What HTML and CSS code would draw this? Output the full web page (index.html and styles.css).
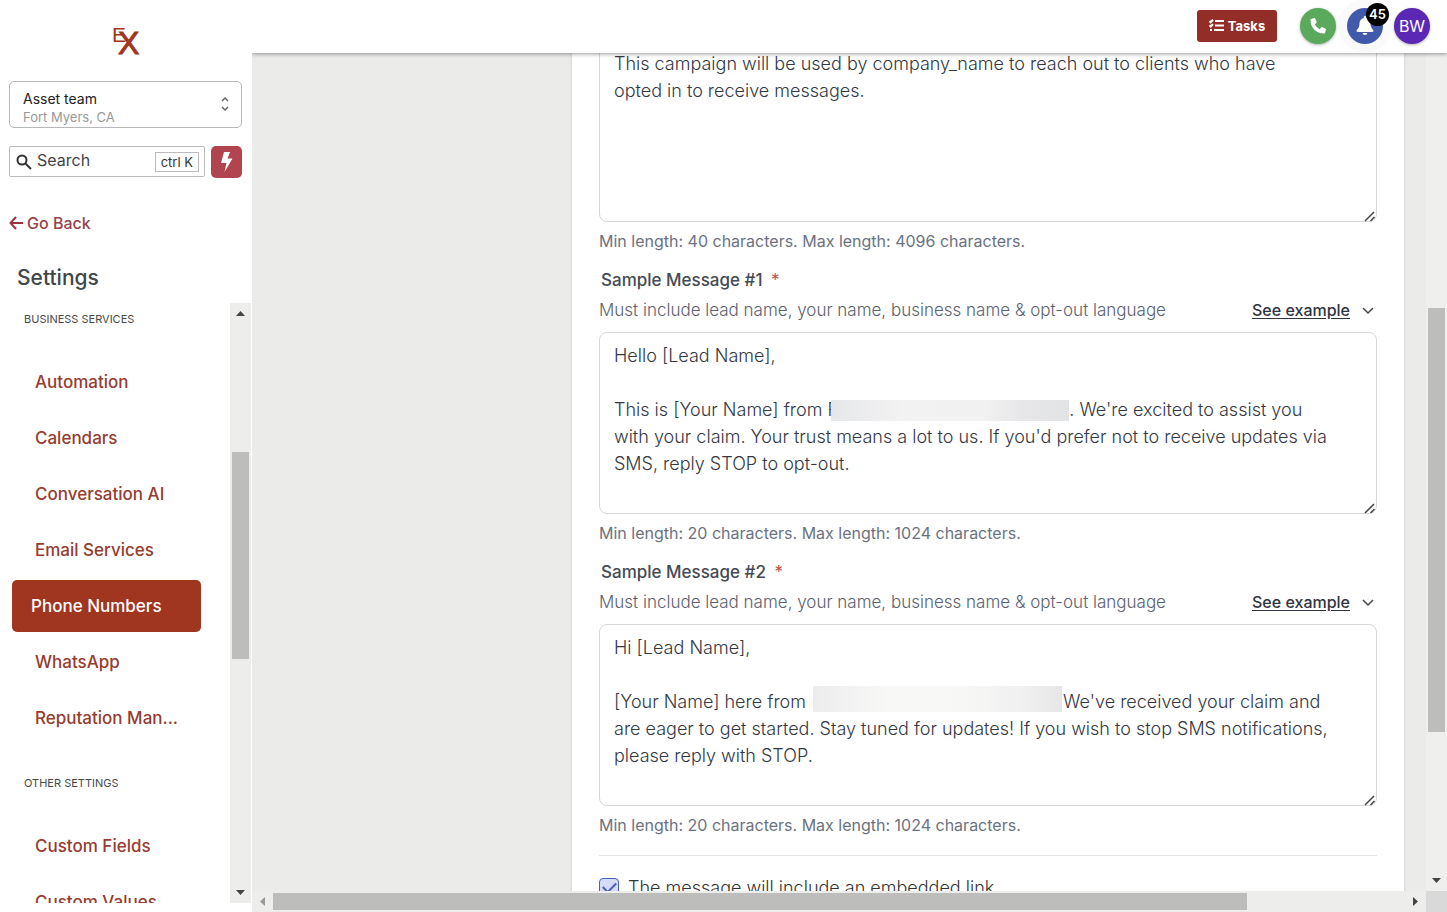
FILE: index.html
```html
<!DOCTYPE html>
<html lang="en">

<head>
	<meta charset="utf-8">
	<title>Settings - Phone Numbers</title>
	<link rel="stylesheet" href="styles.css">
</head>

<body>
	<aside class="sidebar">
		<svg class="logo" width="28" height="32" viewBox="0 0 28 32" role="img" aria-label="EX">
			<text x="0" y="17" font-size="21">E</text>
			<text class="logo-x" x="6" y="29" font-size="32">X</text>
		</svg>

		<button class="team" type="button">
			<span class="team-text">
				<span class="team-name">Asset team</span>
				<span class="team-city">Fort Myers, CA</span>
			</span>
			<svg width="10" height="16" viewBox="0 0 10 16"><path d="M2 5l3-3 3 3M2 11l3 3 3-3" /></svg>
		</button>

		<div class="search-row">
			<label class="search">
				<svg width="16" height="16" viewBox="0 0 16 16"><circle cx="6" cy="6" r="4.5" /><path d="M9.5 9.5L15 15" /></svg>
				<input type="text" placeholder="Search" aria-label="Search">
				<kbd>ctrl K</kbd>
			</label>
			<button class="bolt" type="button" aria-label="Quick actions">
				<svg width="13" height="20" viewBox="0 0 13 20"><path d="M4 0h6L7.500 6.500H12.500L4.500 20 6.500 11H1z" /></svg>
			</button>
		</div>

		<a class="back" href="#">
			<svg width="14" height="14" viewBox="0 0 14 14"><path d="M14 7H1.500M7 1L1.500 7 7 13" /></svg>
			Go Back
		</a>
		<h2>Settings</h2>

		<div class="menu-wrap">
			<nav class="menu">
				<h3>Business Services</h3>
				<a href="#">Automation</a>
				<a href="#">Calendars</a>
				<a href="#">Conversation AI</a>
				<a href="#">Email Services</a>
				<a class="active" href="#">Phone Numbers</a>
				<a href="#">WhatsApp</a>
				<a href="#">Reputation Man...</a>
				<h3>Other Settings</h3>
				<a href="#">Custom Fields</a>
				<a href="#">Custom Values</a>
			</nav>
			<div class="bar bar-menu">
				<svg width="9" height="5" viewBox="0 0 9 5"><path d="M0 5L4.500 0 9 5z" /></svg>
				<div class="track"><div class="thumb"></div></div>
				<svg width="9" height="5" viewBox="0 0 9 5"><path d="M0 0h9L4.500 5z" /></svg>
			</div>
		</div>
	</aside>

	<div class="page">
		<header class="topbar">
			<button class="tasks" type="button">
				<svg width="15" height="13" viewBox="0 0 15 13"><path d="M.5 2l1.200 1.200L4 .8M.5 6.300l1.200 1.200L4 5.100M6 2h9M6 6.500h9M5 11h10M1 11h2" /></svg>
				Tasks
			</button>
			<button class="round call" type="button" aria-label="Call">
				<svg width="16" height="16" viewBox="0 0 16 16"><path d="M1.200.9L4.200.1c.5-.1.900.1 1.100.6l1.300 3.100c.2.400.1.900-.3 1.200L4.800 6.300c.9 2 2.800 3.900 4.900 4.900L11 9.600c.3-.3.800-.4 1.200-.3l3.100 1.300c.5.2.7.6.6 1.100l-.8 3c-.1.500-.5.800-1 .8C6.300 15.500.5 9.700.5 1.900c0-.5.2-.9.700-1z" /></svg>
			</button>
			<button class="round bell" type="button" aria-label="Notifications">
				<svg width="18" height="19" viewBox="0 0 18 19"><path d="M9 0c.8 0 1.300.6 1.300 1.300v.6c2.600.6 4.200 2.800 4.200 5.400 0 3.800 1 5 2.600 6.500.8.8.4 2.200-.9 2.200H1.800C.5 16 .1 14.600.9 13.800c1.600-1.500 2.600-2.700 2.600-6.500 0-2.600 1.600-4.800 4.200-5.400v-.6C7.700.6 8.200 0 9 0zM6.600 17h4.800a2.400 2 0 0 1-4.800 0z" /></svg>
				<span class="count">45</span>
			</button>
			<button class="round user" type="button">BW</button>
		</header>

		<main class="content">
			<form class="card">
				<div class="box">
					<textarea aria-label="Campaign description">This campaign will be used by company_name to reach out to clients who have
opted in to receive messages.</textarea>
					<svg class="grip" width="12" height="12" viewBox="0 0 12 12"><path d="M1 11L10 2M6.500 11L10.500 7" /></svg>
				</div>
				<p class="help">Min length: 40 characters. Max length: 4096 characters.</p>

				<label class="title" for="sample1">Sample Message #1 <span>*</span></label>
				<div class="hint">
					<span>Must include lead name, your name, business name &amp; opt-out language</span>
					<a href="#">See example</a>
					<svg width="12" height="8" viewBox="0 0 12 8"><path d="M1 1l5 5 5-5" /></svg>
				</div>
				<div class="box">
					<textarea id="sample1">Hello [Lead Name],

This is [Your Name] from F&emsp;&emsp;&emsp;&emsp;&emsp;&emsp;&emsp;&emsp;&emsp;&emsp;&emsp;&emsp;&nbsp;&nbsp;&nbsp;. We're excited to assist you
with your claim. Your trust means a lot to us. If you'd prefer not to receive updates via
SMS, reply STOP to opt-out.</textarea>
					<span class="mask mask-one"></span>
					<svg class="grip" width="12" height="12" viewBox="0 0 12 12"><path d="M1 11L10 2M6.500 11L10.500 7" /></svg>
				</div>
				<p class="help">Min length: 20 characters. Max length: 1024 characters.</p>

				<label class="title" for="sample2">Sample Message #2 <span>*</span></label>
				<div class="hint">
					<span>Must include lead name, your name, business name &amp; opt-out language</span>
					<a href="#">See example</a>
					<svg width="12" height="8" viewBox="0 0 12 8"><path d="M1 1l5 5 5-5" /></svg>
				</div>
				<div class="box">
					<textarea id="sample2">Hi [Lead Name],

[Your Name] here from &emsp;&emsp;&emsp;&emsp;&emsp;&emsp;&emsp;&emsp;&emsp;&emsp;&emsp;&emsp;&emsp;&emsp;We've received your claim and
are eager to get started. Stay tuned for updates! If you wish to stop SMS notifications,
please reply with STOP.</textarea>
					<span class="mask mask-two"></span>
					<svg class="grip" width="12" height="12" viewBox="0 0 12 12"><path d="M1 11L10 2M6.500 11L10.500 7" /></svg>
				</div>
				<p class="help">Min length: 20 characters. Max length: 1024 characters.</p>

				<hr>
				<label class="check">
					<input type="checkbox" checked>
					The message will include an embedded link
				</label>
			</form>
		</main>

		<div class="bar bar-page">
			<div class="track"><div class="thumb"></div></div>
			<svg width="9" height="5" viewBox="0 0 9 5"><path d="M0 0h9L4.500 5z" /></svg>
		</div>
		<div class="bar bar-bottom">
			<svg class="off" width="5" height="9" viewBox="0 0 5 9"><path d="M5 0v9L0 4.500z" /></svg>
			<div class="track"><div class="thumb"></div></div>
			<svg width="5" height="9" viewBox="0 0 5 9"><path d="M0 0l5 4.500L0 9z" /></svg>
		</div>
		<div class="corner"></div>
	</div>
</body>

</html>
```
FILE: styles.css
```css
* { box-sizing: border-box; }
body { display: flex; height: 100vh; margin: 0; overflow: hidden; font: 16px/24px Inter, "Liberation Sans", sans-serif; color: #3a3f4a; background: #fff; }
button, input, textarea, kbd { font: inherit; color: inherit; }
button { border: 0; padding: 0; }
svg { flex: none; display: block; }
h2, h3, p { margin: 0; font-weight: 400; }

/* sidebar */
.sidebar { display: flex; flex-direction: column; flex: none; width: 252px; padding: 25px 0 9px; }
.logo { margin-left: 112px; margin-bottom: 24px; fill: #a03520; font-family: "Liberation Sans", sans-serif; }
.logo-x { stroke: #a03520; stroke-width: 1; }
.team { display: flex; align-items: center; justify-content: space-between; height: 47px; margin: 0 10px 18px 9px; padding: 6px 11px 0 13px; border: 1px solid #b8b8b8; border-radius: 5px; background: #fff; text-align: left; }
.team svg { margin-bottom: 8px; fill: none; stroke: #666; stroke-width: 1.5; }
.team-text { display: grid; line-height: 18px; font-size: 14px; }
.team-name { color: #222; }
.team-city { color: #999; font-size: 13px; }
.search-row { display: flex; gap: 6px; margin: 0 10px 0 9px; }
.search { display: flex; align-items: center; flex: 1; gap: 5px; min-width: 0; height: 31px; padding: 0 5px 0 6px; border: 1px solid #bbb; border-radius: 2px; }
.search svg { fill: none; stroke: #333; stroke-width: 2; }
.search input { flex: 1; min-width: 0; height: 26px; padding: 0 0 3px; border: 0; outline: 0; background: none; }
.search input::placeholder { color: #444; opacity: 1; }
.search kbd { flex: none; height: 20px; padding: 0 5px; border: 1px solid #bbb; font-size: 13px; line-height: 18px; color: #333; }
.bolt { display: grid; place-items: center; flex: none; width: 31px; height: 32px; border-radius: 5px; background: #b04550; }
.bolt svg { fill: #fff; }
.back { display: flex; align-items: center; gap: 4px; margin: 33px 0 0 9px; color: #96424a; font-weight: 500; text-decoration: none; }
.back svg { fill: none; stroke: #9c3440; stroke-width: 2; }
.sidebar h2 { margin: 29px 0 11px 17px; font-size: 21px; line-height: 28px; font-weight: 500; color: #414648; }
.menu-wrap { display: flex; flex: 1; min-height: 0; }
.menu { flex: 1; overflow: hidden; padding: 8px 29px 0 12px; }
.menu h3 { margin: 0 0 29px 12px; font-size: 11px; line-height: 16px; color: #484848; text-transform: uppercase; }
.menu a { display: block; height: 52px; margin-bottom: 4px; padding: 0 23px; font-size: 17px; line-height: 52px; font-weight: 500; color: #963c30; text-decoration: none; white-space: nowrap; }
.menu a + h3 { margin-top: 31px; }
.menu a.active { padding: 0 19px; border-radius: 5px; background: #a03520; color: #fff; }

/* scrollbars */
.bar { display: flex; align-items: center; background: #ededec; }
.bar svg { margin: 8px; fill: #444; }
.bar .off { fill: #999; }
.track { flex: 1; }
.thumb { background: #bdbdbc; }
.bar-menu { flex-direction: column; width: 21px; margin-right: 1px; }
.bar-menu .thumb { width: 17px; height: 207px; margin-top: 128px; }
.bar-page { flex-direction: column; background: #efefee; }
.bar-page .thumb { width: 17px; height: 424px; margin-top: 255px; }
.bar-bottom .thumb { width: 86%; height: 17px; }
.corner { background: #d9d9d9; }

/* top bar */
.page { display: grid; grid-template: 53px minmax(0, 1fr) 21px / minmax(0, 1fr) 21px; flex: 1; min-width: 0; }
.topbar { z-index: 1; grid-column: 1 / 3; display: flex; align-items: center; justify-content: flex-end; padding: 0 17px 2px 0; background: #fff; box-shadow: 0 1px 4px rgba(0, 0, 0, .4); clip-path: inset(0 0 -8px 0); }
.tasks { display: flex; align-items: center; justify-content: center; gap: 4px; width: 80px; height: 32px; margin-right: 23px; border-radius: 3px; background: #932d28; color: #fff; font-size: 13px; font-weight: 700; }
.tasks svg { fill: none; stroke: #fff; stroke-width: 2; }
.round { display: grid; place-items: center; position: relative; width: 36px; height: 36px; border-radius: 50%; color: #fff; box-shadow: 0 1px 3px rgba(0, 0, 0, .3); }
.round svg { fill: #fff; }
.call { background: #5aa95c; }
.bell { margin: 0 11px; background: #4059ab; box-shadow: 0 0 0 9px #f9faf9; }
.user { background: #5b28b5; }
.count { position: absolute; top: -5px; right: -6px; width: 23px; height: 23px; border-radius: 50%; background: #000; font-size: 13px; line-height: 22px; font-weight: 600; text-align: center; }
.call, .user { z-index: 1; }

/* form */
.content { overflow: hidden; background: #ebebea; }
.card { margin: -40px 22px 0 320px; padding: 27px; background: #fff; box-shadow: 0 0 3px rgba(0, 0, 0, .15); line-height: 27px; }
.box { position: relative; height: 182px; }
.box textarea { display: block; width: 100%; height: 182px; padding: 9px 14px; border: 1px solid #d6d7da; border-radius: 8px; outline: 0; resize: none; overflow: hidden; background: #fff; white-space: pre-wrap; font-size: 18px; font-weight: 300; color: #333844; }
.grip { position: absolute; right: 1px; bottom: 0; fill: none; stroke: #444; stroke-width: 1.5; }
.mask { position: absolute; }
.mask-one { top: 68px; left: 232px; width: 238px; height: 21px; background: linear-gradient(90deg, #e6e7e9, #f2f2f3 30%, #f1f1f2 65%, #e7e7e9 80%, #e2e3e5); }
.mask-two { top: 62px; left: 214px; width: 249px; height: 26px; background: linear-gradient(90deg, #ececed, #f8f8f7 30%, #f8f8f7 55%, #f0f0f0 85%, #e6e6e8); }
.help { margin: 6px 0 12px; color: #6c7280; }
.title { display: block; margin-left: 2px; font-size: 17px; font-weight: 500; color: #454a54; }
.title span { margin-left: 4px; font-weight: 400; color: #c0504d; }
.hint { display: flex; align-items: center; gap: 12px; margin: 3px 3px 8px 0; font-size: 17px; font-weight: 300; color: #5c6270; }
.hint a { margin-left: auto; font-size: 16px; font-weight: 500; color: #2f3441; text-underline-offset: 2px; }
.hint svg { fill: none; stroke: #444; stroke-width: 1.5; }
hr { height: 1px; margin: 16px 0 18px; border: 0; background: #e5e5e7; }
.check { display: flex; align-items: center; gap: 9px; font-size: 18px; font-weight: 300; color: #333; }
.check input { appearance: none; width: 20px; height: 20px; margin: 0; border: 1px solid #4a60bb; border-radius: 4px; background: #d5dcf8; display: grid; place-items: center; }
.check input::after { content: ""; width: 11px; height: 6px; margin-bottom: 4px; border: solid #4a60bb; border-width: 0 0 2px 2px; transform: rotate(-45deg); }
```
